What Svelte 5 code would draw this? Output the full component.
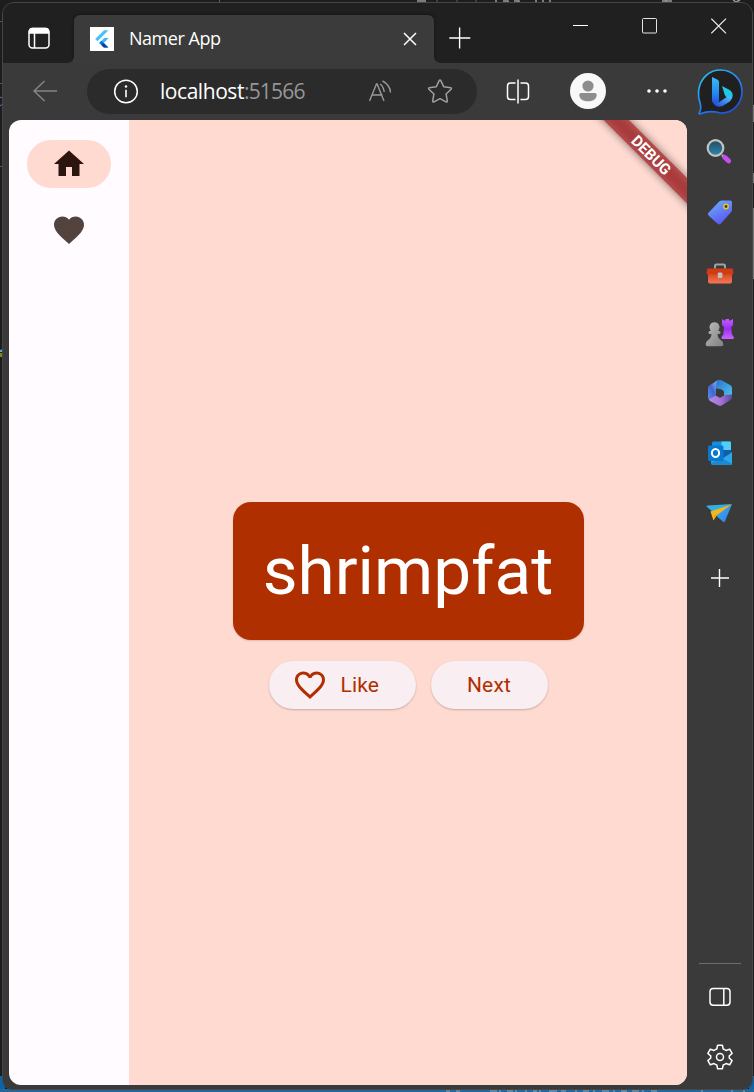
<script>
  const navItems = [
    { label: 'Home', active: true, d: 'M10 20v-6h4v6h5v-8h3L12 3 2 12h3v8z' },
    {
      label: 'Favorites',
      active: false,
      d: 'M12 21.35l-1.45-1.32C5.4 15.36 2 12.28 2 8.5 2 5.42 4.42 3 7.5 3c1.74 0 3.41.81 4.5 2.09C13.09 3.81 14.76 3 16.5 3 19.58 3 22 5.42 22 8.5c0 3.78-3.4 6.86-8.55 11.54L12 21.35z'
    }
  ];
  const heartOutline =
    'M16.5 3c-1.74 0-3.41.81-4.5 2.09C10.91 3.81 9.24 3 7.5 3 4.42 3 2 5.42 2 8.5c0 3.78 3.4 6.86 8.55 11.54L12 21.35l1.45-1.32C18.6 15.36 22 12.28 22 8.5 22 5.42 19.58 3 16.5 3zm-4.4 15.55l-.1.1-.1-.1C7.14 14.24 4 11.39 4 8.5 4 6.5 5.5 5 7.5 5c1.54 0 3.04.99 3.57 2.36h1.87C13.46 5.99 14.96 5 16.5 5c2 0 3.5 1.5 3.5 3.5 0 2.89-3.14 5.74-7.9 10.05z';
</script>

<div class="desktop">
  <svg class="behind" width="754" height="1092" viewBox="0 0 754 1092">
    <rect width="754" height="1092" fill="#1d1d1e" />
    <path d="M219.500 0v3M437 0v3M457 0v3M476 0v3" stroke="#626262" />
    <path d="M417 1h9M496 0v3M503 1h5v2M514 1h5v2M536 0v3M543 0v3M550 0v3M662 1h10M666 0v3M733 0l3 2 4-2" stroke="#9a9a9a" fill="none" stroke-width="1.500" />
    <path d="M0 21.500h2M0 83.500h2M0 166.500h3" stroke="#555" />
    <path d="M0 97q3 0 3 4t-3 5" stroke="#706ac0" fill="none" />
    <path d="M0 350l3-1v3H0" fill="#64a8c5" />
    <path d="M0 353h3v4H0" fill="#808713" />
    <path d="M753.500 105v17M753.500 173v10M753.500 208v71" stroke="#777" />
    <path d="M0 1076h5v16H0zM749 1076h5v16h-5z" fill="#0864ac" />
    <rect y="1089" width="754" height="3" fill="#24679b" />
    <path d="M446 1091h4M456 1091h4M490 1091h7M500 1090v2M507 1091h6M516 1090v2M526 1090v2M533 1091h4M540 1090v2M549 1091h8M561 1091h5M576 1090v2M583 1091h6M594 1090v2M602 1091h7M614 1090v2M621 1091h6M632 1091h7M643 1090v2M651 1091h6M702 1090v2M732 1090v2M744 1090v2" stroke="#9aa8af" />
  </svg>

  <div class="window">
    <header class="titlebar">
      <div class="workspaces">
        <svg width="24" height="24" viewBox="0 0 24 24" fill="none" stroke="#fff" stroke-width="1.500">
          <rect x="2" y="2.500" width="20" height="19.500" rx="3.500" />
          <path d="M2.500 5.500c0-2 1-3 3-3h13c2 0 3 1 3 3v1.500h-19z" fill="#fff" />
          <path d="M7.500 7v15" />
        </svg>
      </div>
      <div class="tab">
        <svg width="24" height="24" viewBox="0 0 24 24">
          <rect width="24" height="24" fill="#fff" />
          <path d="M5.200 12L14 3.300h4.500L7.500 14.300z" fill="#48c3fa" />
          <path d="M9.200 16l5-5h4.500L13.800 16z" fill="#3bbcf6" />
          <path d="M9.200 16l2.300-2.300 6.800 6.800h-4.500z" fill="#0874c6" />
          <path d="M11.500 18.300l2.300-2.300 4.500 4.500h-4.500z" fill="#173ba0" />
        </svg>
        <span class="tab-title">Namer App</span>
        <svg class="tab-close" width="14" height="14" viewBox="0 0 14 14" fill="none" stroke="#fff" stroke-width="1.500">
          <path d="M1 1l12 12M13 1L1 13" />
        </svg>
      </div>
      <svg class="new-tab" width="22" height="22" viewBox="0 0 22 22" fill="none" stroke="#fff" stroke-width="1.400">
        <path d="M10.600 .5v21M.3 11h21" />
      </svg>
      <div class="controls">
        <svg width="16" height="16" viewBox="0 0 16 16" stroke="#fff"><path d="M0 7.500h15" /></svg>
        <svg width="16" height="16" viewBox="0 0 16 16" fill="none" stroke="#e4e4e4"><rect x=".5" y=".5" width="14" height="14.500" rx="1" /></svg>
        <svg width="16" height="16" viewBox="0 0 16 16" stroke="#eee" stroke-width="1.200"><path d="M.3.700l14.700 14.700M15 .700l-14.700 14.700" /></svg>
      </div>
    </header>

    <div class="toolbar">
      <svg class="back" width="26" height="22" viewBox="0 0 26 22" fill="none" stroke="#858585" stroke-width="1.500">
        <path d="M11.500 1L1 11l10.500 10M1 11H24" />
      </svg>
      <div class="address">
        <svg class="info" width="26" height="26" viewBox="0 0 26 26" fill="none" stroke="#fff" stroke-width="1.500">
          <circle cx="13" cy="12.500" r="11.300" />
          <path d="M13 10.800v7.500" stroke-width="1.600" />
          <circle cx="13" cy="7.500" r="1.200" fill="#fff" stroke="none" />
        </svg>
        <span class="url"><span class="host">localhost</span>:51566</span>
        <svg class="read" width="25" height="24" viewBox="0 0 25 24" fill="none" stroke="#999" stroke-width="1.400">
          <path d="M1.500 21L8.500 4h.6L16 21M4 15h10.500M12 4c2.500 1.800 3.800 4.500 4.200 8M14.500 1c5 2.500 7.700 6.500 8 11.500" />
        </svg>
        <svg class="star" width="26" height="25" viewBox="0 0 26 25" fill="none" stroke="#a0a0a0" stroke-width="1.500" stroke-linejoin="round">
          <path d="M12.200 1.700q.8-1.300 1.600 0l3 6.100 6.900 1q1.300.3.400 1.400l-5 4.800 1.200 6.900q0 1.500-1.300.9L13 19.600l-6 3.200q-1.300.6-1.300-.9L6.900 15l-5-4.800Q1 9.100 2.300 8.800l6.900-1z" />
        </svg>
      </div>
      <svg class="split" width="26" height="26" viewBox="0 0 26 26" fill="none" stroke="#fff" stroke-width="1.500">
        <path d="M10.500 4H5.500C3.500 4 2.500 5 2.500 7v10.500c0 2 1 3 3 3h5M15.500 4h5c2 0 3 1 3 3v10.500c0 2-1 3-3 3h-5M13 .5v24" />
      </svg>
      <svg class="profile" width="36" height="36" viewBox="0 0 36 36">
        <circle cx="18" cy="18" r="18" fill="#f8f8f8" />
        <circle cx="18" cy="13" r="5.600" fill="#8d8d8d" />
        <path d="M11.500 20h13c2 0 2.500 1 2.100 3-.8 3.700-4 5.200-8.600 5.200S10.200 26.700 9.400 23c-.4-2 .1-3 2.100-3z" fill="#8d8d8d" />
      </svg>
      <svg class="more" width="20" height="6" viewBox="0 0 20 6" fill="#fff">
        <circle cx="2" cy="3" r="1.800" /><circle cx="10" cy="3" r="1.800" /><circle cx="18" cy="3" r="1.800" />
      </svg>
      <svg class="bing" width="48" height="48" viewBox="0 0 48 48">
        <defs>
          <linearGradient id="ring" x1="0" y1="0" x2=".7" y2="1"><stop stop-color="#1fd0ef" /><stop offset=".5" stop-color="#268df3" /><stop offset="1" stop-color="#1f50dd" /></linearGradient>
          <linearGradient id="stem" x1="0" y1="0" x2="0" y2="1"><stop stop-color="#39bdf4" /><stop offset=".6" stop-color="#2188f1" /><stop offset="1" stop-color="#234bdc" /></linearGradient>
          <linearGradient id="bowl" x1="0" y1="1" x2="1" y2="0"><stop stop-color="#1b44dc" /><stop offset="1" stop-color="#52c5ff" /></linearGradient>
        </defs>
        <path d="M3.200 45c1.800-3 1.900-6 1-9.500C2.700 31.700 2 27.600 2.600 22.500 4.300 10 13.400 2 24.500 2 36.500 2 46 11.300 46 23.500S36.500 45.600 24.500 45c-6-1.500-13-2.200-18.500.3-2 .8-3.400.7-2.800-.3z" fill="#202020" stroke="url(#ring)" stroke-width="1.700" />
        <path d="M16 9l5.200 2.500c1.300.7 1.800 1.400 1.800 3V34l-3.300 2.500C17.500 36 16 34.500 16 32z" fill="url(#stem)" />
        <path d="M26 18l6.800 3.500c4.500 2.200 5.200 7.500 1.700 10.500-1.700-1.500-4.300-2.500-5.700-5z" fill="#20c8e8" />
        <path d="M17.500 35c2 .5 4 .2 5.500-.8l8.500-5.700c3-1.200 5 .8 3.500 3.500-1.200 2-4 3.300-6 4.500-4.500 3.700-10 2.500-11.500-1.500z" fill="url(#bowl)" />
      </svg>
    </div>

    <div class="body">
      <main class="app">
        <nav class="rail">
          {#each navItems as item}
            <div class="destination" class:active={item.active} aria-label={item.label}>
              <svg width="36" height="36" viewBox="0 0 24 24"><path d={item.d} /></svg>
            </div>
          {/each}
        </nav>
        <section class="page">
          <div class="word">shrimpfat</div>
          <div class="actions">
            <button class="like">
              <svg width="36" height="36" viewBox="0 0 24 24" fill="#b02f00"><path d={heartOutline} /></svg>
              <span>Like</span>
            </button>
            <button class="next">Next</button>
          </div>
          <svg class="banner" width="110" height="110" viewBox="0 0 110 110">
            <defs><filter id="shade" x="-30%" y="-200%" width="160%" height="500%"><feGaussianBlur stdDeviation="4.500" /></filter></defs>
            <g transform="translate(74.300 35.100) rotate(45)">
              <rect x="-90" y="-9" width="180" height="18" fill="#000" opacity=".5" filter="url(#shade)" />
              <rect x="-90" y="-9" width="180" height="18" fill="#b8262a" fill-opacity=".7" />
              <text y="5.400" text-anchor="middle">DEBUG</text>
            </g>
          </svg>
        </section>
      </main>

      <aside class="sidebar">
        <svg width="30" height="30" viewBox="0 0 30 30">
          <defs>
            <linearGradient id="lens" x1="0" y1="0" x2="0" y2="1"><stop stop-color="#274b5a" /><stop offset="1" stop-color="#2b88b6" /></linearGradient>
            <linearGradient id="tag" x1="0" y1="0" x2=".5" y2="1"><stop stop-color="#6cb5fb" /><stop offset="1" stop-color="#5c58f3" /></linearGradient>
            <linearGradient id="box" x1="0" y1="0" x2="0" y2="1"><stop stop-color="#d04018" /><stop offset="1" stop-color="#f77755" /></linearGradient>
            <linearGradient id="rook" x1="0" y1="0" x2="0" y2="1"><stop stop-color="#c55bff" /><stop offset=".5" stop-color="#9a2ff5" /><stop offset="1" stop-color="#ca65fb" /></linearGradient>
            <linearGradient id="pawn" x1="0" y1="0" x2="1" y2="1"><stop stop-color="#bdbdbd" /><stop offset="1" stop-color="#808080" /></linearGradient>
            <linearGradient id="hexleft" x1="1" y1="0" x2="0" y2="1"><stop stop-color="#9ac5f2" /><stop offset=".5" stop-color="#4166cf" /><stop offset="1" stop-color="#5690eb" /></linearGradient>
            <linearGradient id="hexright" x1="0" y1="0" x2="1" y2="1"><stop stop-color="#2c70cc" /><stop offset="1" stop-color="#4cc8f0" /></linearGradient>
            <linearGradient id="hexbottom" x1="0" y1="0" x2="1" y2="0"><stop stop-color="#b58ae8" /><stop offset=".5" stop-color="#a574d4" /><stop offset="1" stop-color="#594aa6" /></linearGradient>
            <linearGradient id="plane" x1="0" y1="0" x2="1" y2="1"><stop stop-color="#39b9f2" /><stop offset="1" stop-color="#3677e5" /></linearGradient>
          </defs>
          <path d="M17 18l3 3" stroke="#aaa" stroke-width="2.500" />
          <circle cx="10.500" cy="11" r="7.800" fill="url(#lens)" stroke="#c2c2be" stroke-width="2.200" />
          <path d="M19.700 20.200l4 3.800" stroke="#c84bf6" stroke-width="4.800" stroke-linecap="round" />
        </svg>
        <svg width="30" height="30" viewBox="0 0 30 30">
          <path d="M14.500 4.300q1-.8 2.300-.8H25q2 0 2 2v7.300q0 1.300-.8 2.200L16 26.500q-2 1.700-3.700 0L4 19q-2-2-.3-3.500z" fill="url(#tag)" />
          <circle cx="21" cy="9.500" r="2.200" fill="#293957" stroke="#f1c510" stroke-width="1.500" />
        </svg>
        <svg width="30" height="30" viewBox="0 0 30 30">
          <path d="M10 10.500V8q0-1.500 1.500-1.500h7Q20 6.500 20 8v2.500" fill="none" stroke="#a2a2a2" stroke-width="2" />
          <path d="M3 14.500h24v9q0 2-2 2H5q-2 0-2-2z" fill="url(#box)" />
          <path d="M3 10.500h24q.7 0 .8.800l.6 4.200q0 .8-1 .8H2.500q-1 0-1-1l.6-4q.1-.8.900-.8z" fill="#cf3c14" />
          <rect x="12.800" y="14.500" width="4.600" height="5.500" rx="1" fill="#c0c0c0" />
        </svg>
        <svg width="30" height="30" viewBox="0 0 30 30">
          <path d="M17 1l2 1.500h1.500V1h3.500v1.500h1.500L28 1v6l-1.800 2 .8 7.500 1.800 2.500q.4 2-.8 2H17.500q-1.500 0-1-2l1.800-2.500L19 9l-2-2z" fill="url(#rook)" />
          <path transform="translate(0 -.800)" d="M9.500 5a4.900 4.900 0 0 1 4.500 7.200q-.4 1-1 1.600h1.500q1 0 1 1.500t-1.500 1.500h-1.500c.2 3 1.500 5 4.500 7q1.300 1 1.300 3.500 0 1.700-1.800 1.700H2.500Q.7 29 .7 27.300.7 24.800 2 23.800c3-2 4.300-4 4.500-7H5q-1.500 0-1.500-1.500t1-1.500H6q-.6-.6-1-1.600A4.900 4.900 0 0 1 9.500 5z" fill="url(#pawn)" />
        </svg>
        <svg width="30" height="30" viewBox="0 0 30 30">
          <path d="M10 3.500l3-1.300q2-.8 4 .300l8 4.500q2 1.100 2 3v8l-3.500 2L18 16.500v-4.200L10 10z" fill="url(#hexright)" />
          <path d="M13 2.200q-2 1.500-2 4V20l-6 2.800-1-1q-1-1-1-2.800V10q0-2 2-3z" fill="url(#hexleft)" />
          <path d="M3.800 21.500L11 17.500l4 2 4-2.500L27 16.500V19q0 2-2 3.200l-8 5q-2 1.200-4 0L5 23z" fill="url(#hexbottom)" />
          <path d="M11 12.800l4-2 4 2.600v4.100l-4 2.300-4-2.200z" fill="#3a3a3a" />
        </svg>
        <svg width="30" height="30" viewBox="0 0 30 30">
          <g transform="translate(0 1)">
            <rect x="7" y="2.500" width="19" height="17" rx="1.500" fill="#1490df" />
            <path d="M16.500 2.500H25q1 0 1 1V11h-9.500z" fill="#50cff8" />
            <path d="M27 13v11.500q0 1.500-1.500 1.500H8q-2 0-2-2V13l11 6.500z" fill="#29a9ea" />
            <path d="M26 11v3l-8 5v-8z" fill="#145da8" />
            <path d="M6 24l12-4.500 9 5.500q-.5 1-1.500 1H8z" fill="#1674bd" opacity=".6" />
            <rect x="3" y="6.500" width="15.500" height="15.500" rx="1.500" fill="#0878d1" />
            <ellipse cx="10.500" cy="14" rx="3.600" ry="4" fill="none" stroke="#fff" stroke-width="2" />
          </g>
        </svg>
        <svg width="30" height="30" viewBox="0 0 30 30">
          <path d="M1.500 7.500q0-1 1.500-1l24-1.500-18 9z" fill="#33afe7" />
          <path d="M27 5.200l-7 17q-.7 1.500-2 .5L10 15.500z" fill="url(#plane)" />
          <path d="M27 5.200L5.500 12.500 8.500 21.500 12 16z" fill="#f4b719" />
          <path d="M11 14.500L8.500 21.500 10 16z" fill="#d48c0d" />
        </svg>
        <svg class="add" width="18" height="18" viewBox="0 0 18 18" fill="none" stroke="#fff" stroke-width="1.400"><path d="M8.500 0v18M0 9h18" /></svg>
        <hr />
        <svg class="panel" width="24" height="24" viewBox="0 0 24 24" fill="none" stroke="#fff" stroke-width="1.500">
          <rect x="2" y="3.500" width="20" height="16.800" rx="3.200" /><path d="M15.800 4v16" />
        </svg>
        <svg class="gear" width="28" height="28" viewBox="0 0 28 28" fill="none" stroke="#fff" stroke-width="1.500" stroke-linejoin="round">
          <path d="M11.600 2.200h4.800l.8 3.800q1.600.5 2.800 1.500l3.700-1.300 2.400 4.200-2.900 2.600q.3 1 0 2l2.900 2.600-2.400 4.200-3.700-1.300q-1.200 1-2.800 1.500l-.8 3.800h-4.800l-.8-3.800Q9.200 21.500 8 20.500l-3.700 1.300-2.400-4.200L4.800 15q-.3-1 0-2l-2.900-2.600 2.400-4.200L8 7.500Q9.200 6.500 10.800 6z" />
          <circle cx="14" cy="14" r="3.500" />
        </svg>
      </aside>
    </div>
  </div>
</div>

<style>
  :global(body) { margin: 0; background: #1d1d1e; }
  .desktop { width: 754px; height: 1092px; position: relative; overflow: hidden; box-sizing: border-box; padding: 2px 1px 2px 2px; }
  .behind { position: absolute; inset: 0; }
  svg { display: block; flex: none; }
  .window { position: relative; height: 1088px; box-sizing: border-box; background: #3a3a3a; border: 1px solid #464646; border-radius: 12px 12px 10px 10px; overflow: hidden; display: flex; flex-direction: column; }
  .titlebar { height: 60px; flex: none; background: #202020; display: flex; }
  .workspaces { width: 71px; box-sizing: border-box; padding: 23px 0 0 24px; }
  .tab { position: relative; margin-top: 12px; width: 360px; height: 48px; box-sizing: border-box; padding: 0 17px 0 16px; display: flex; align-items: center; background: #3b3b3b; border-radius: 6px 6px 0 0; box-shadow: 0 -1px 3px #151515; }
  .tab::before, .tab::after { content: ""; position: absolute; bottom: 0; width: 6px; height: 6px; }
  .tab::before { right: 100%; background: radial-gradient(circle at 0 0, transparent 5.500px, #3b3b3b 6px); }
  .tab::after { left: 100%; background: radial-gradient(circle at 100% 0, transparent 5.500px, #3b3b3b 6px); }
  .tab-title { margin-left: 15px; font: 18px/24px "Open Sans", sans-serif; color: #fff; letter-spacing: -.48px; white-space: nowrap; padding-bottom: 2px; }
  .tab-close { margin-left: auto; }
  .new-tab { margin: 24px 0 0 15px; }
  .controls { margin: 15px 25px 0 auto; display: flex; gap: 53px; }
  .toolbar { position: relative; height: 57px; flex: none; display: flex; align-items: center; padding-left: 30px; background: #3a3a3a; }
  .back { margin-bottom: 2px; }
  .address { margin-left: 28px; width: 390px; height: 45px; box-sizing: border-box; border-radius: 23px; background: #2b2b2b; display: flex; align-items: center; padding: 0 24px 0 26px; }
  .url { margin-left: 21px; padding-bottom: 1px; font: 21px/28px "Open Sans", sans-serif; color: #969696; letter-spacing: -.8px; }
  .host { color: #fff; letter-spacing: -.45px; }
  .read { margin-left: auto; }
  .star { margin-left: 34px; }
  .split { margin-left: 28px; }
  .profile { margin-left: 39px; margin-bottom: 1px; }
  .more { margin-left: 41px; margin-bottom: 1px; }
  .bing { margin-left: 29px; }
  .body { display: flex; height: 965px; flex: none; padding-left: 6px; }
  .app { width: 678px; flex: none; display: flex; overflow: hidden; border-radius: 12px; background: #fffbff; }
  .rail { width: 120px; flex: none; box-sizing: border-box; padding-top: 20px; display: flex; flex-direction: column; align-items: center; gap: 18px; }
  .destination { width: 84px; height: 48px; border-radius: 24px; display: flex; align-items: center; justify-content: center; fill: #53433f; }
  .destination.active { background: #ffdad1; fill: #2b150e; }
  .page { position: relative; flex: 1; background: #ffdad1; display: flex; flex-direction: column; align-items: center; box-sizing: border-box; padding-top: 382px; }
  .word { width: 351px; height: 138px; border-radius: 18px; background: #b02f00; color: #fff; font: 67.5px/138px Roboto, sans-serif; text-align: center; box-shadow: 0 1px 2px rgba(0,0,0,.14); }
  .actions { display: flex; gap: 15px; margin-top: 21px; }
  button { height: 48px; border: 0; padding: 0; border-radius: 24px; background: #f9eef1; color: #b02f00; font: 400 21px/24px Roboto, sans-serif; letter-spacing: .15px; display: flex; align-items: center; justify-content: center; box-shadow: 0 1px 2px rgba(0,0,0,.22); }
  .like { width: 147px; justify-content: flex-start; padding-left: 23.5px; gap: 12.5px; }
  .next { width: 117px; }
  .banner { position: absolute; right: 0; top: 0; }
  .banner text { font: 700 15.3px Roboto, sans-serif; fill: #fff; }
  .sidebar { width: 64px; flex: none; box-sizing: border-box; padding: 17px 0 0 1px; display: flex; flex-direction: column; align-items: center; gap: 30.3px; }
  .add { margin-top: 10px; }
  hr { width: 42px; border: 0; border-top: 1px solid #6d6d6d; margin: auto 0 -10px; }
  .panel { margin-bottom: 4px; }
  .gear { margin-bottom: 14px; }
</style>
